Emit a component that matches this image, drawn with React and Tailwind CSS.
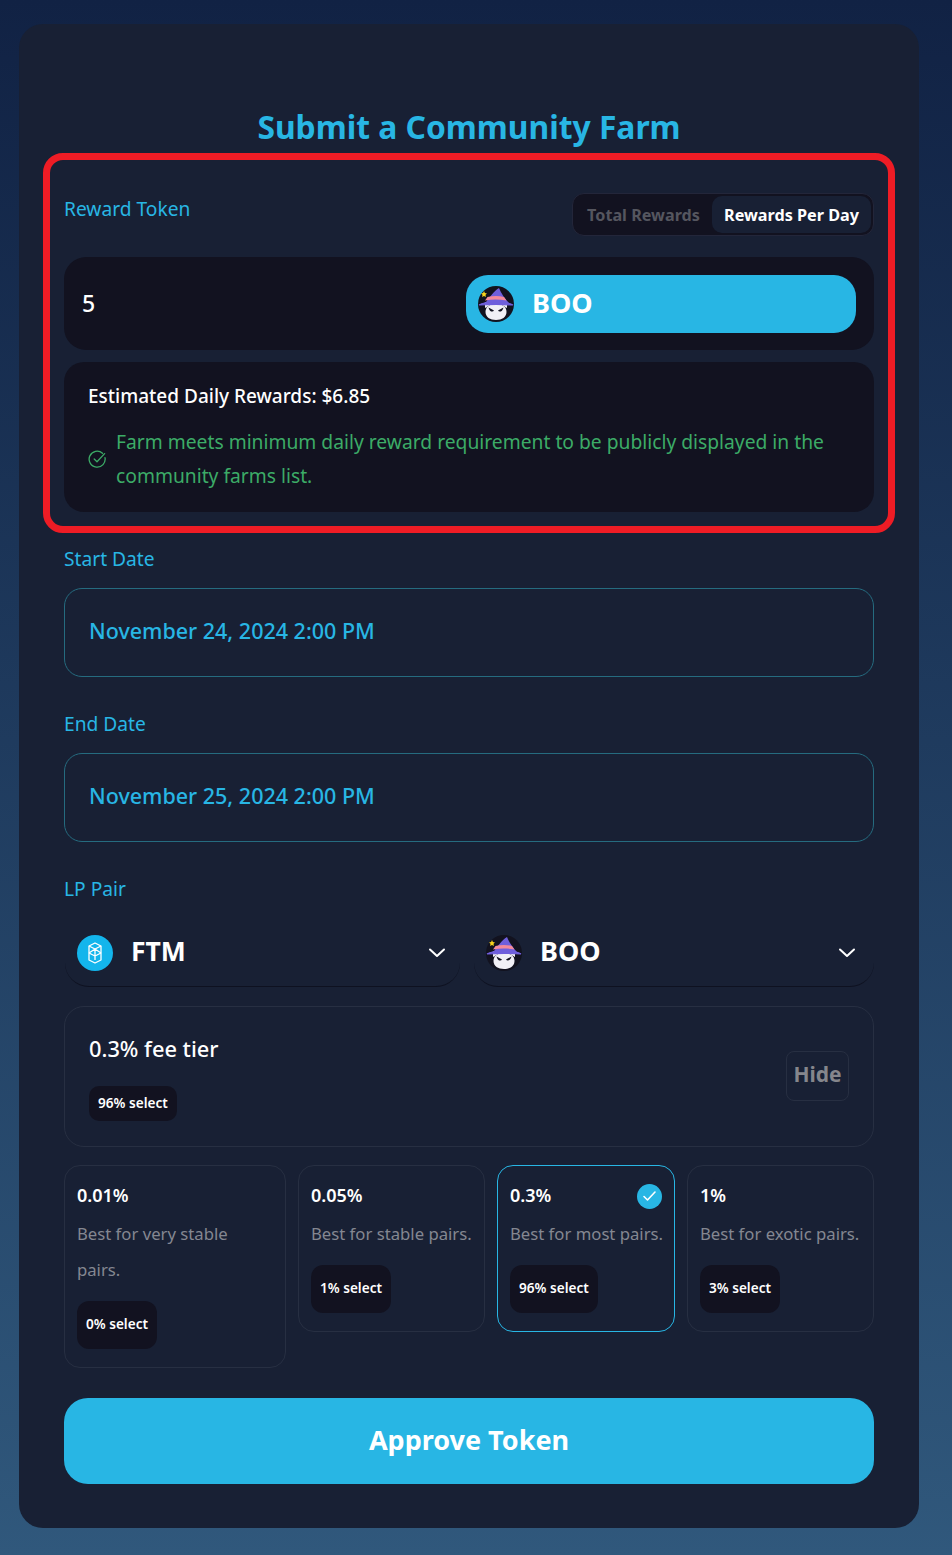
const Boo = ({ s = 36 }) => (
  <svg width={s} height={s} viewBox="0 0 36 36" className="shrink-0">
    <circle cx="18" cy="18" r="18" fill="#12121f" />
    <path d="M7 22 L7 16 L12 19 Z M29 22 L29 16 L24 19 Z" fill="#f1f0f6" />
    <path d="M7.5 26 C7.5 21 11 18 18 18 C25 18 28.5 21 28.5 26 C28.5 31 24 34 18 34 C12 34 7.5 31 7.5 26 Z" fill="#f1f0f6" />
    <path d="M10.5 21.5 L16 24.5 C15 26.5 11.5 26 10.5 21.5 Z M25.5 21.5 L20 24.5 C21 26.5 24.5 26 25.5 21.5 Z" fill="#12121f" />
    <path d="M7.5 17 C10 13 16 5 21 2 C23 7 27 13 31 17 Z" fill="#6f5fdc" />
    <path d="M9.5 11 C15 9.5 21 9.5 26 11 L28.5 14.5 C21 13.2 14 13.2 7 14.5 Z" fill="#f4899b" />
    <path d="M1 19 C5 16.5 9 16 18 16 C27 16 31 16.5 35 19 C27 18.4 9 18.4 1 19 Z" fill="#6f5fdc" stroke="#6f5fdc" strokeWidth="1.2" />
    <path d="M6 5 L6.9 7.1 L9 7.4 L7.5 8.8 L7.9 11 L6 10 L4.1 11 L4.5 8.8 L3 7.4 L5.1 7.1 Z" fill="#f7d21c" />
  </svg>
);
const Ftm = () => (
  <svg width="36" height="36" viewBox="0 0 36 36" className="shrink-0">
    <circle cx="18" cy="18" r="18" fill="#13b5ec" />
    <g fill="none" stroke="#fff" strokeWidth="1.3" strokeLinejoin="round">
      <path d="M12 11 L18 8 L24 11 L24 25 L18 28 L12 25 Z" />
      <path d="M12 11 L18 14 L24 11 M12 18 L18 21 L24 18 M18 14 L12 18 M18 14 L24 18 M18 14 V21 M18 21 V25" />
    </g>
  </svg>
);
const Chevron = () => (
  <svg width="18" height="10" viewBox="0 0 18 10" fill="none" stroke="#fff" strokeWidth="2" strokeLinecap="round" strokeLinejoin="round" className="shrink-0">
    <path d="M2 1.5 L9 8 L16 1.5" />
  </svg>
);
const Fee = ({ pct, desc, sel, selected }) => (
  <div className={`rounded-[16px] border px-3 pt-[16px] pb-[18px] ${selected ? "border-[#28b6e4]" : "border-[#272f42]"}`}>
    <div className="flex h-[28px] items-center justify-between">
      <span className="pb-[2px] text-[18px] font-semibold text-white">{pct}</span>
      {selected && (
        <span className="flex h-[25px] w-[25px] items-center justify-center rounded-full bg-[#28b6e4]">
          <svg width="15" height="12" viewBox="0 0 15 12" fill="none" stroke="#fff" strokeWidth="1.6" strokeLinecap="round" strokeLinejoin="round"><path d="M2 6.5 L5.5 10 L13 2" /></svg>
        </span>
      )}
    </div>
    <p className="mt-[6px] whitespace-pre text-[16.7px] leading-[36px] text-[#848791]">{desc}</p>
    <span className="mt-[13px] flex h-[48px] w-fit items-center rounded-[12px] bg-[#121220] px-[9px] pb-px text-[13.6px] font-semibold text-white">{sel}</span>
  </div>
);
const DateField = ({ label, value }) => (
  <div>
    <div className="pt-px text-[19.2px] leading-[27px] text-[#28b6e4]">{label}</div>
    <div className="mt-[16px] flex h-[89px] items-center rounded-[18px] border border-[#256b7f] pb-[2px] pl-[24px] text-[21.5px] font-medium text-[#28b6e4]">{value}</div>
  </div>
);
export default function App() {
  return (
    <div className="h-[1555px] bg-gradient-to-b from-[#112244] to-[#30587c] px-[19px] pt-[24px]" style={{ fontFamily: '"Noto Sans", sans-serif' }}>
      <div className="h-[1504px] w-[900px] rounded-[24px] bg-[#182034] px-[45px] pt-[80px]">
        <h1 className="h-[49px] pt-px text-center text-[31.8px] font-bold leading-[44px] text-[#28b6e4]">Submit a Community Farm</h1>
        <div className="-mx-[21px] h-[380px] rounded-[20px] border-[7px] border-[#ee1c25] px-[14px] pt-[34px]">
          <div className="flex h-[43px] items-start justify-between">
            <span className="mt-[1px] text-[19.2px] leading-[28px] text-[#28b6e4]">Reward Token</span>
            <div className="-mt-px flex h-[43px] w-[302px] rounded-[12px] border border-[#23263a] bg-[#121220] p-[2px] text-[16.2px] font-bold">
              <span className="flex w-[137px] items-center justify-center pt-[2px] text-[#55565f]">Total Rewards</span>
              <span className="flex flex-1 items-center justify-center rounded-[10px] bg-[#182034] pt-[2px] text-white">Rewards Per Day</span>
            </div>
          </div>
          <div className="mt-[20px] flex h-[93px] items-center justify-between rounded-[22px] bg-[#121220] pl-[18px] pr-[18px]">
            <span className="text-[23px] font-medium text-white">5</span>
            <div className="flex h-[58px] w-[390px] items-center gap-[18px] rounded-[22px] bg-[#28b6e4] pl-[12px]">
              <Boo />
              <span className="pb-[1px] text-[27px] font-bold text-white">BOO</span>
            </div>
          </div>
          <div className="mt-[12px] h-[150px] rounded-[20px] bg-[#121220] px-[24px] pt-[20px]">
            <div className="text-[19px] font-medium leading-[28px] text-white">Estimated Daily Rewards: $6.85</div>
            <div className="mt-[15px] flex items-center gap-[9px]">
              <svg width="19" height="19" viewBox="0 0 19 19" fill="none" stroke="#3cab67" strokeWidth="1.3" strokeLinecap="round" strokeLinejoin="round" className="shrink-0">
                <path d="M17 7.6 A8 8 0 1 1 14.5 3.2" />
                <path d="M6.2 9 L9 11.8 L16.6 3.6" />
              </svg>
              <p className="text-[19.25px] leading-[34px] text-[#3cab67]">Farm meets minimum daily reward requirement to be publicly displayed in the community farms list.</p>
            </div>
          </div>
        </div>
        <div className="mt-[11px] flex flex-col gap-[32px]">
          <DateField label="Start Date" value="November 24, 2024 2:00 PM" />
          <DateField label="End Date" value="November 25, 2024 2:00 PM" />
        </div>
        <div className="mt-[32px] pt-px text-[19.2px] leading-[27px] text-[#28b6e4]">LP Pair</div>
        <div className="mt-[17px] flex gap-[14px] pl-px">
          <div className="flex h-[68px] w-[395px] items-center justify-between rounded-[24px] border-b border-[#0e1120] pl-[12px] pr-[14px]">
            <div className="flex items-center gap-[18px]"><Ftm /><span className="pb-[2px] text-[26.5px] font-bold text-white">FTM</span></div>
            <Chevron />
          </div>
          <div className="flex h-[68px] flex-1 items-center justify-between rounded-[24px] border-b border-[#0e1120] pl-[12px] pr-[18px]">
            <div className="flex items-center gap-[18px]"><Boo /><span className="pb-[2px] text-[27px] font-bold text-white">BOO</span></div>
            <Chevron />
          </div>
        </div>
        <div className="mt-[19px] flex h-[141px] items-center justify-between rounded-[20px] border border-[#272f42] px-[24px]">
          <div className="pt-[2px]">
            <div className="text-[21.8px] font-medium leading-[30px] text-white">0.3% fee tier</div>
            <span className="mt-[22px] flex h-[35px] w-fit items-center rounded-[10px] bg-[#121220] px-[9px] text-[13.6px] font-semibold text-white">96% select</span>
          </div>
          <span className="-mt-[2px] flex h-[50px] w-[63px] items-center justify-center rounded-[8px] border border-[#272f42] pb-[2px] text-[21px] font-bold text-[#85868c]">Hide</span>
        </div>
        <div className="mt-[18px] grid grid-cols-[222px_187px_178px_187px] items-start gap-[12px]">
          <Fee pct="0.01%" desc={"Best for very stable\npairs."} sel="0% select" />
          <Fee pct="0.05%" desc="Best for stable pairs." sel="1% select" />
          <Fee pct="0.3%" desc="Best for most pairs." sel="96% select" selected />
          <Fee pct="1%" desc="Best for exotic pairs." sel="3% select" />
        </div>
        <button className="mt-[30px] h-[86px] w-full rounded-[24px] bg-[#28b6e4] pb-[2px] text-[27px] font-bold text-white">Approve Token</button>
      </div>
    </div>
  );
}
